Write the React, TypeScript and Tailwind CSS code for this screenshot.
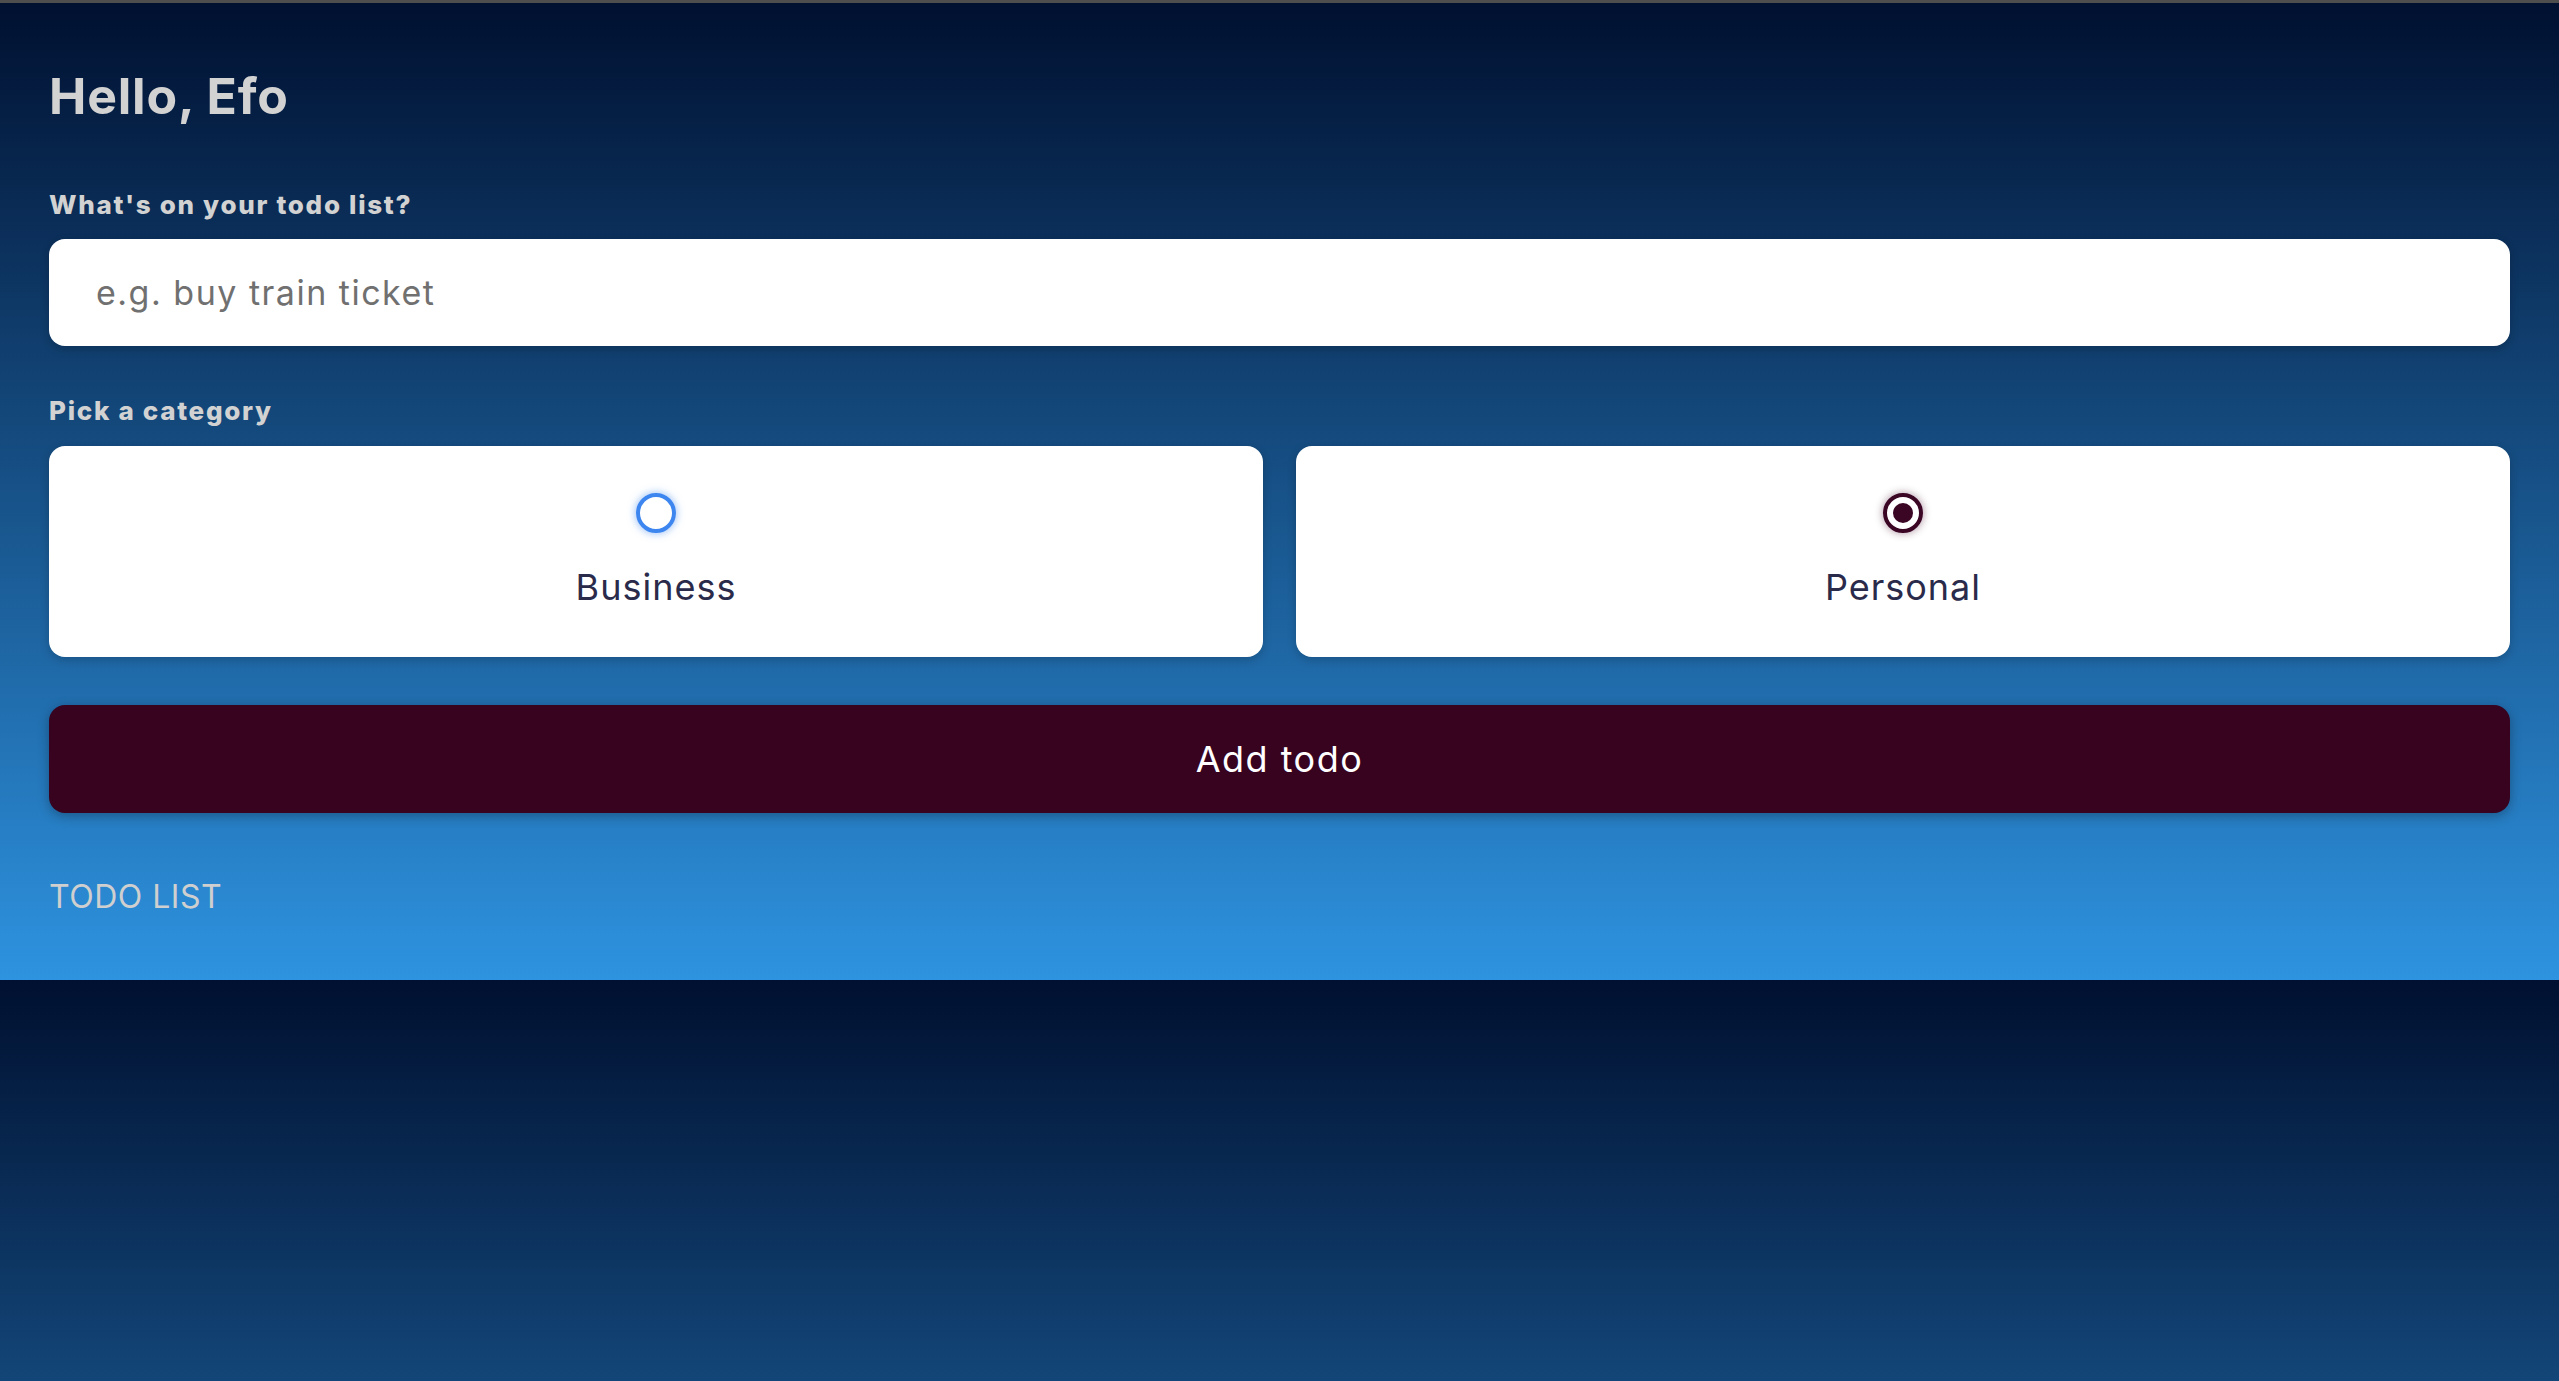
import React, { useState } from "react";

type Category = "business" | "personal";

const CategoryCard = ({
  label,
  value,
  selected,
  onPick,
}: {
  label: string;
  value: Category;
  selected: boolean;
  onPick: (v: Category) => void;
}) => {
  return (
    <label
      className="flex-1 h-[211px] bg-white rounded-[16px] shadow-[0_3px_10px_rgba(0,0,0,0.2)] flex flex-col items-center pt-[47px] cursor-pointer"
      onClick={() => onPick(value)}
    >
      {selected ? (
        <span className="w-[40px] h-[40px] rounded-full border-[4px] border-[#3b0524] flex items-center justify-center shadow-[0_0_8px_rgba(59,5,36,0.45)]">
          <span className="w-[20px] h-[20px] rounded-full bg-[#3b0524]" />
        </span>
      ) : (
        <span className="w-[40px] h-[40px] rounded-full border-[4px] border-[#3d86f0] shadow-[0_0_8px_rgba(61,134,240,0.6)]" />
      )}
      <span className="mt-[36px] text-[36px] leading-none tracking-[1px] text-[#2a2a4a]">{label}</span>
    </label>
  );
};

const App = () => {
  const [category, setCategory] = useState<Category>("personal");
  const [todo, setTodo] = useState("");

  return (
    <div
      className="min-h-screen border-t-[3px] border-[#4e4e4e] bg-[linear-gradient(180deg,#001030_0%,#2e93e0_100%)] bg-[length:100%_977px] bg-repeat-y font-['Inter',sans-serif]"
    >
      <main className="px-[49px] pt-[68px] pb-[68px] w-full">
        <h1 className="text-[50px] leading-none font-bold text-[#d2d2d2] tracking-[0.8px]">
          Hello, Efo
        </h1>

        <h4 className="mt-[71px] text-[26px] leading-none font-extrabold tracking-[1.7px] text-[#d2d2d2]">
          What's on your todo list?
        </h4>
        <input
          type="text"
          value={todo}
          onChange={(e) => setTodo(e.target.value)}
          placeholder="e.g. buy train ticket"
          className="mt-[21px] w-full h-[107px] rounded-[16px] bg-white px-[47px] text-[34px] tracking-[1.5px] text-[#333] placeholder:text-[#707070] outline-none shadow-[0_3px_10px_rgba(0,0,0,0.2)]"
        />

        <h4 className="mt-[52px] text-[26px] leading-none font-extrabold tracking-[1.7px] text-[#d2d2d2]">
          Pick a category
        </h4>
        <div className="mt-[22px] flex gap-[33px]">
          <CategoryCard
            label="Business"
            value="business"
            selected={category === "business"}
            onPick={setCategory}
          />
          <CategoryCard
            label="Personal"
            value="personal"
            selected={category === "personal"}
            onPick={setCategory}
          />
        </div>

        <button className="mt-[48px] w-full h-[108px] rounded-[16px] bg-[#37031f] text-white text-[36px] tracking-[1.5px] shadow-[0_3px_12px_rgba(0,0,0,0.3)]">
          Add todo
        </button>

        <h3 className="mt-[68px] text-[32px] leading-none font-normal tracking-[0.5px] text-[#cfcfcf]">
          TODO LIST
        </h3>
      </main>
    </div>
  );
};

export default App;
